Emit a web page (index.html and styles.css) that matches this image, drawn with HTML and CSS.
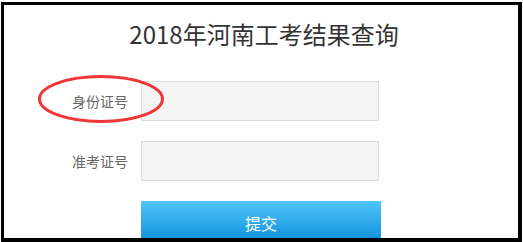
FILE: index.html
```html
<!DOCTYPE html>
<html lang="zh-CN">
<head>
<meta charset="utf-8">
<title>2018年河南工考结果查询</title>
<link rel="stylesheet" href="styles.css">
</head>
<body>
<div class="frame">
  <h1 class="title">2018年河南工考结果查询</h1>
  <form class="form">
    <div class="row">
      <label class="label">身份证号</label>
      <input class="field" type="text">
    </div>
    <div class="row">
      <label class="label">准考证号</label>
      <input class="field" type="text">
    </div>
    <div class="row">
      <span class="label"></span>
      <button class="submit" type="button">提交</button>
    </div>
  </form>
  <svg class="mark" width="132" height="52" viewBox="0 0 132 52">
    <ellipse cx="66" cy="26" rx="61.5" ry="22.5" fill="none" stroke="#f03636" stroke-width="3"/>
  </svg>
</div>
</body>
</html>
```
FILE: styles.css
```css
html, body {
  margin: 0;
  padding: 0;
  background: #fff;
}
body {
  font-family: "Noto Sans CJK SC", "Noto Sans", sans-serif;
  width: 523px;
  height: 242px;
  overflow: hidden;
}
.frame {
  position: relative;
  box-sizing: border-box;
  margin: 2px 0 0 1px;
  width: 521px;
  height: 240px;
  border: 3px solid #000;
  border-right-width: 4px;
  border-bottom-width: 4px;
  overflow: hidden;
  background: #fff;
}
.title {
  margin: 13px 0 0 0;
  padding-left: 6px;
  font-size: 24px;
  line-height: 32px;
  font-weight: normal;
  color: #333;
  text-align: center;
}
.form {
  margin: 31px 0 0 0;
  display: flex;
  flex-direction: column;
  gap: 20px;
}
.row {
  display: flex;
  align-items: center;
  gap: 13px;
}
.label {
  width: 124px;
  flex: none;
  text-align: right;
  font-size: 14px;
  color: #666;
}
.field {
  box-sizing: border-box;
  width: 238px;
  height: 40px;
  margin: 0;
  border: 1px solid #dcdcdc;
  background: #f4f4f4;
  outline: none;
}
.submit {
  width: 240px;
  height: 44px;
  margin: 0;
  border: none;
  padding: 0;
  background: linear-gradient(to bottom, #4fc5fa 0%, #0a8cd9 100%);
  color: #fff;
  font-family: "Noto Sans CJK SC", "Noto Sans", sans-serif;
  font-size: 16px;
}
.mark {
  position: absolute;
  left: 31px;
  top: 68px;
}
```
